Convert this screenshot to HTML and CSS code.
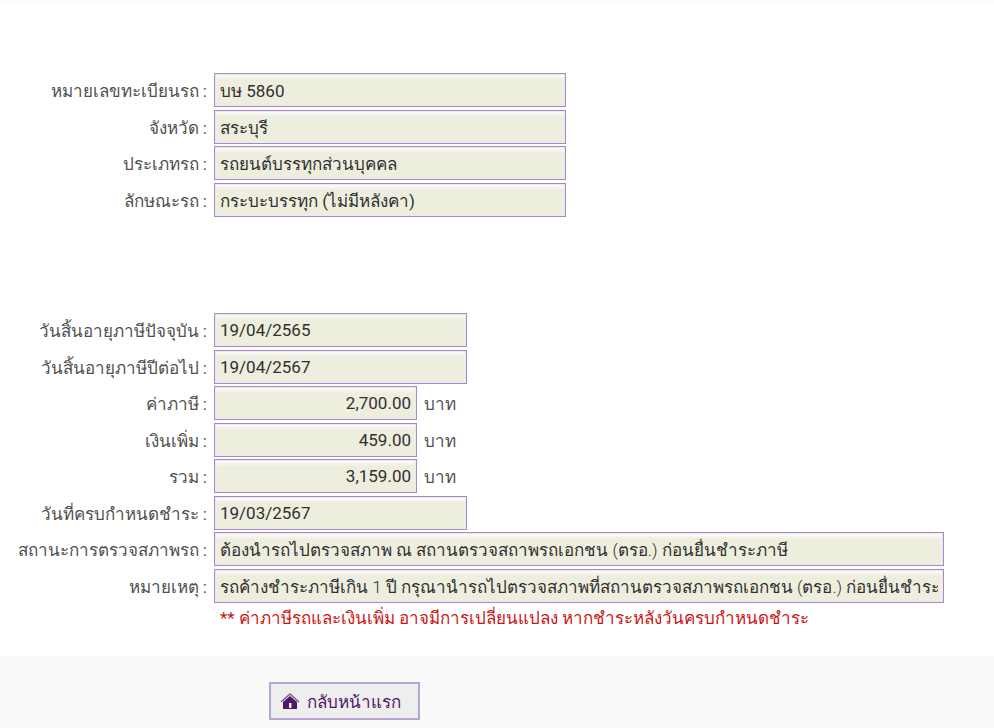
FILE: index.html
```
<!DOCTYPE html>
<html lang="th">
<head>
    <meta charset="UTF-8">
    <meta name="viewport" content="width=device-width, initial-scale=1.0">
    <title>ข้อมูลภาษีรถ</title>
    <link rel="stylesheet" href="styles.css">
</head>
<body>
    <form>
        <div class="section">
            <div class="row"><label for="plate">หมายเลขทะเบียนรถ :</label><input id="plate" class="medium" type="text" value="บษ 5860" readonly></div>
            <div class="row"><label for="province">จังหวัด :</label><input id="province" class="medium" type="text" value="สระบุรี" readonly></div>
            <div class="row"><label for="type">ประเภทรถ :</label><input id="type" class="medium" type="text" value="รถยนต์บรรทุกส่วนบุคคล" readonly></div>
            <div class="row"><label for="body">ลักษณะรถ :</label><input id="body" class="medium" type="text" value="กระบะบรรทุก (ไม่มีหลังคา)" readonly></div>
        </div>

        <div class="section">
            <div class="row"><label for="expire">วันสิ้นอายุภาษีปัจจุบัน :</label><input id="expire" class="date" type="text" value="19/04/2565" readonly></div>
            <div class="row"><label for="next">วันสิ้นอายุภาษีปีต่อไป :</label><input id="next" class="date" type="text" value="19/04/2567" readonly></div>
            <div class="row"><label for="tax">ค่าภาษี :</label><input id="tax" class="money" type="text" value="2,700.00" readonly><span class="unit">บาท</span></div>
            <div class="row"><label for="fine">เงินเพิ่ม :</label><input id="fine" class="money" type="text" value="459.00" readonly><span class="unit">บาท</span></div>
            <div class="row"><label for="total">รวม :</label><input id="total" class="money" type="text" value="3,159.00" readonly><span class="unit">บาท</span></div>
            <div class="row"><label for="due">วันที่ครบกำหนดชำระ :</label><input id="due" class="date" type="text" value="19/03/2567" readonly></div>
            <div class="row"><label for="status">สถานะการตรวจสภาพรถ :</label><input id="status" class="wide" type="text" value="ต้องนำรถไปตรวจสภาพ ณ สถานตรวจสถาพรถเอกชน (ตรอ.) ก่อนยื่นชำระภาษี" readonly></div>
            <div class="row"><label for="remark">หมายเหตุ :</label><input id="remark" class="wide" type="text" value="รถค้างชำระภาษีเกิน 1 ปี กรุณานำรถไปตรวจสภาพที่สถานตรวจสภาพรถเอกชน (ตรอ.) ก่อนยื่นชำระ" readonly></div>
            <p class="note">** ค่าภาษีรถและเงินเพิ่ม อาจมีการเปลี่ยนแปลง หากชำระหลังวันครบกำหนดชำระ</p>
        </div>
    </form>

    <footer>
        <button class="home" type="button">
            <svg width="20" height="18" viewBox="0 0 20 18" aria-hidden="true">
                <path d="M1 10 L10 2 L19 10" fill="none" stroke="#7d5590" stroke-width="1.4"/>
                <path d="M3 10 L10 4 L17 10 V17 H3 Z" fill="#4f1763"/>
                <path d="M9 11 H11.5 V16 H9 Z" fill="#eeeeee"/>
            </svg>
            <span>กลับหน้าแรก</span>
        </button>
    </footer>
</body>
</html>
```
FILE: styles.css
```
body {
    margin: 0;
    background-color: #ffffff;
    border-top: 3px solid #fafafa;
    color: #505050;
    font-family: Roboto, sans-serif;
    font-size: 17px;
}
form {
    padding: 70px 0 24px;
}
.section + .section {
    margin-top: 96px;
}
.row {
    display: flex;
    align-items: center;
    margin-bottom: 2px;
}
.row:nth-child(odd) {
    margin-bottom: 3px;
}
label {
    flex: none;
    width: 207px;
    margin-right: 7px;
    text-align: right;
}
input {
    box-sizing: border-box;
    height: 34px;
    padding: 0 5px;
    border: 1px solid #a58cc0;
    border-radius: 0;
    background-color: #eeeedf;
    box-shadow: inset 0 0 0 1px #f0e6f2, inset 0 4px 4px -1px #ffffff;
    color: #303030;
    font: inherit;
    min-width: 0;
}
.medium {
    width: 352px;
}
.date {
    width: 253px;
}
.money {
    width: 203px;
    text-align: right;
}
.wide {
    width: 730px;
    font-weight: 300;
}
.unit {
    margin-left: 7px;
}
.note {
    margin: 0 0 0 220px;
    line-height: 27px;
    color: #cc1515;
}
footer {
    min-height: 72px;
    box-sizing: border-box;
    padding: 26px 0 8px 269px;
    background-color: #fafafa;
}
.home {
    display: flex;
    align-items: center;
    gap: 7px;
    height: 38px;
    padding: 0 17px 0 9px;
    border: 2px solid #b9a5d3;
    background-color: #eeeeee;
    color: #4f1763;
    font: inherit;
}
```
